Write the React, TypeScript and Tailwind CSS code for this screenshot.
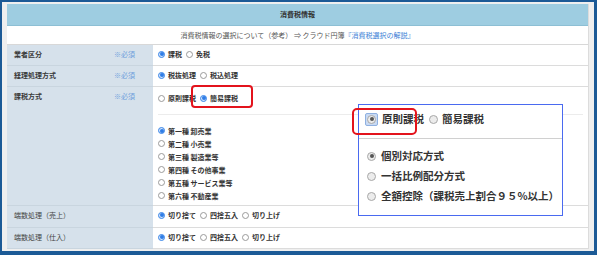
import React from "react"

const font = "font-['Noto_Sans_CJK_JP','Noto_Sans',sans-serif]"

function Radio({ checked = false }: { checked?: boolean }) {
  return (
    <span
      className={
        "inline-flex w-[7px] h-[7px] rounded-full border items-center justify-center shrink-0 " +
        (checked ? "border-[#3a86e8] bg-[#cfe2fb]" : "border-[#9a9a9a] bg-white")
      }
    >
      {checked && <span className="w-[4px] h-[4px] rounded-full bg-[#2f7de6]" />}
    </span>
  )
}

function BigRadio({ checked = false, focus = false }: { checked?: boolean; focus?: boolean }) {
  const dot = (
    <span className="inline-flex w-[9px] h-[9px] rounded-full border border-[#a8a8a8] bg-[#ececec] items-center justify-center shrink-0">
      {checked && <span className="w-[4px] h-[4px] rounded-full bg-[#555]" />}
    </span>
  )
  if (!focus) return dot
  return (
    <span className="inline-flex p-[1px] rounded-[2px] bg-[#c9daf3] border border-[#8fb0e0]">{dot}</span>
  )
}

function Options({ items, selected }: { items: string[]; selected: number }) {
  return (
    <div className="flex items-center gap-[4px] whitespace-nowrap">
      {items.map((t, i) => (
        <span key={t} className="flex items-center gap-[3px]">
          <Radio checked={i === selected} />
          <span>{t}</span>
        </span>
      ))}
    </div>
  )
}

function Row({
  label,
  required,
  bold = true,
  height,
  children,
}: {
  label: string
  required?: boolean
  bold?: boolean
  height: string
  children: React.ReactNode
}) {
  return (
    <div className={"flex border-b border-[#dcdcdc] " + height}>
      <div className="w-[146px] shrink-0 bg-[#d6e1eb] flex pl-[7px] pr-[18px] pt-[4px] justify-between border-b border-[#c9d5df] -mb-px">
        <span className={"leading-[10px] " + (bold ? "font-bold text-[#3a3a3a]" : "text-[#444]")}>{label}</span>
        {required && <span className="leading-[10px] text-[#6d9fdc]">※必須</span>}
      </div>
      <div className="flex-1 bg-white pl-[5px] pt-[4px] leading-[10px] font-bold text-[#333]">
        {children}
      </div>
    </div>
  )
}

export default function App() {
  const kinds = [
    "第一種 卸売業",
    "第二種 小売業",
    "第三種 製造業等",
    "第四種 その他事業",
    "第五種 サービス業等",
    "第六種 不動産業",
  ]
  return (
    <div className={"relative w-[597px] h-[255px] text-[7px] " + font}>
      <div className="w-full h-full border-l-2 border-t-2 border-r-[3px] border-b-4 border-[#1c5a96] bg-[#efefef] pl-[5px] pr-[5px] pt-[2px] pb-[2px]">
        <div className="w-[582px] h-[245px] flex flex-col border-r border-[#dcdcdc]">
          <div className="h-[22px] bg-[#9ecde1] border-b border-[#8dbfd4] flex items-center justify-center font-bold text-[#333]">
            消費税情報
          </div>
          <div className="h-[19px] bg-white border-b border-[#d8d8d8] flex items-center justify-center text-[#555]">
            消費税情報の選択について（参考） ⇒ クラウド円簿
            <span className="text-[#3c7fd6]">『消費税選択の解説』</span>
          </div>
          <Row label="業者区分" required height="h-[21px]">
            <Options items={["課税", "免税"]} selected={0} />
          </Row>
          <Row label="経理処理方式" required height="h-[21px]">
            <Options items={["税抜処理", "税込処理"]} selected={0} />
          </Row>
          <Row label="課税方式" required height="h-[119px]">
            <div className="flex flex-col">
              <div className="h-[24px] pt-[2px] border-b border-[#ececec] mr-[5px]">
                <Options items={["原則課税", "簡易課税"]} selected={1} />
              </div>
              <div className="flex flex-col pt-[9px]">
                {kinds.map((k, i) => (
                  <div key={k} className="h-[13px] flex items-center gap-[3px] whitespace-nowrap">
                    <Radio checked={i === 0} />
                    <span>{k}</span>
                  </div>
                ))}
              </div>
            </div>
          </Row>
          <Row label="端数処理（売上）" bold={false} height="h-[22px]">
            <Options items={["切り捨て", "四捨五入", "切り上げ"]} selected={0} />
          </Row>
          <Row label="端数処理（仕入）" bold={false} height="h-[21px]">
            <Options items={["切り捨て", "四捨五入", "切り上げ"]} selected={0} />
          </Row>
        </div>
      </div>

      {/* red highlight on the table */}
      <div className="absolute left-[191px] top-[85px] w-[62px] h-[23px] border-2 border-[#e3131c] rounded-[4px]" />

      {/* zoomed callout */}
      <div className="absolute left-[358px] top-[104px] w-[205px] h-[112px] border border-[#4a6af0] bg-white flex flex-col text-[10.5px] font-semibold text-[#333] whitespace-nowrap">
        <div className="h-[34px] border-b border-[#d0d0d0] flex items-start pt-[7px] pl-[6px] gap-[5px]">
          <span className="flex items-center gap-[4px]">
            <BigRadio checked focus />
            <span className="leading-[14px]">原則課税</span>
          </span>
          <span className="flex items-center gap-[4px]">
            <BigRadio />
            <span className="leading-[14px]">簡易課税</span>
          </span>
        </div>
        <div className="flex flex-col pt-[7px] pl-[8px]">
          {["個別対応方式", "一括比例配分方式", "全額控除（課税売上割合９５%以上）"].map((t, i) => (
            <div key={t} className="h-[20px] flex items-center gap-[5px]">
              <BigRadio checked={i === 0} />
              <span>{t}</span>
            </div>
          ))}
        </div>
      </div>
      <div className="absolute left-[352px] top-[108px] w-[65px] h-[27px] border-2 border-[#e3131c] rounded-[5px]" />
    </div>
  )
}
